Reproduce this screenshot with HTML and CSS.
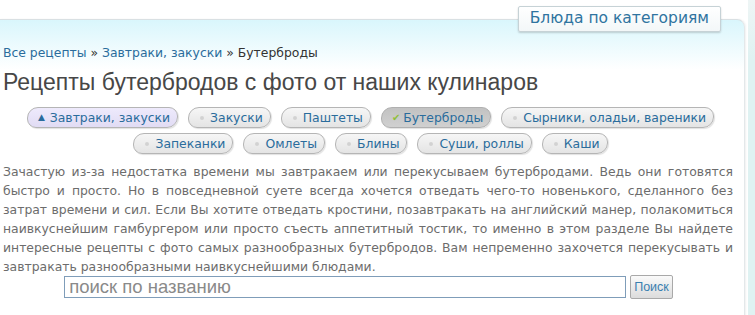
FILE: index.html
```html
<!DOCTYPE html>
<html lang="ru">
<head>
  <meta charset="UTF-8">
  <title>Рецепты бутербродов</title>
  <link rel="stylesheet" href="styles.css">
</head>
<body>
  <div class="wrap">
    <div class="main">
      <div class="panel">
        <a class="cat-tab" href="#">Блюда по категориям</a>

        <div class="crumbs">
          <a href="#">Все рецепты</a> &raquo; <a href="#">Завтраки, закуски</a> &raquo; <span>Бутерброды</span>
        </div>

        <h1>Рецепты бутербродов с фото от наших кулинаров</h1>

        <div class="tag-list">
          <div class="tags">
            <a class="tag parent" href="#"><span class="mark up">▲</span>Завтраки, закуски</a>
            <a class="tag" href="#"><span class="mark dot"></span>Закуски</a>
            <a class="tag" href="#"><span class="mark dot"></span>Паштеты</a>
            <a class="tag active" href="#"><span class="mark check">✔</span>Бутерброды</a>
            <a class="tag" href="#"><span class="mark dot"></span>Сырники, оладьи, вареники</a>
          </div>
          <div class="tags">
            <a class="tag" href="#"><span class="mark dot"></span>Запеканки</a>
            <a class="tag" href="#"><span class="mark dot"></span>Омлеты</a>
            <a class="tag" href="#"><span class="mark dot"></span>Блины</a>
            <a class="tag" href="#"><span class="mark dot"></span>Суши, роллы</a>
            <a class="tag" href="#"><span class="mark dot"></span>Каши</a>
          </div>
        </div>

        <p class="intro">Зачастую из-за недостатка времени мы завтракаем или перекусываем бутербродами. Ведь они готовятся быстро и просто. Но в повседневной суете всегда хочется отведать чего-то новенького, сделанного без затрат времени и сил. Если Вы хотите отведать кростини, позавтракать на английский манер, полакомиться наивкуснейшим гамбургером или просто съесть аппетитный тостик, то именно в этом разделе Вы найдете интересные рецепты с фото самых разнообразных бутербродов. Вам непременно захочется перекусывать и завтракать разнообразными наивкуснейшими блюдами.</p>

        <form class="search" onsubmit="return false">
          <input type="text" placeholder="поиск по названию">
          <button type="submit">Поиск</button>
        </form>
      </div>
    </div>
    <div class="side"></div>
  </div>
</body>
</html>
```

FILE: styles.css
```css
html, body {
  margin: 0;
  padding: 0;
  height: 100%;
  overflow: hidden;
  background: #fff;
}

body {
  font-family: 'DejaVu Sans', Verdana, sans-serif;
  font-size: 12.4px;
}

a {
  text-decoration: none;
  color: #2a6c9c;
}

.wrap {
  display: flex;
  height: 100%;
}

.main {
  width: 748px;
  flex: none;
}

.side {
  flex: 1;
  background: linear-gradient(to bottom, #eef5f5, #dff2f2 60px);
}

.panel {
  position: relative;
  width: 741px;
  margin-top: 19px;
  padding: 25px 0 40px 3px;
  border-top: 1px solid #d9e0e3;
  border-right: 1px solid #e3e8ea;
  border-top-right-radius: 8px;
  background: linear-gradient(to bottom, #d9f6fc, #ffffff 50px);
  box-shadow: 1px 0 2px rgba(0, 0, 0, 0.06);
}

.cat-tab {
  position: absolute;
  top: -14px;
  right: 23px;
  padding: 0 11px;
  height: 24px;
  line-height: 23px;
  font-size: 15.5px;
  color: #2f74a0;
  border: 1px solid #c6d2d6;
  border-radius: 2px;
  background: linear-gradient(to bottom, #ffffff, #f3f7f8);
  box-shadow: 0 1px 2px rgba(0, 0, 0, 0.18);
}

.crumbs {
  line-height: 16px;
  color: #333;
}

h1 {
  margin: 7px 0 0;
  font-family: 'Liberation Sans', Arial, sans-serif;
  font-size: 23px;
  font-weight: normal;
  line-height: 28px;
  color: #474747;
}

.tag-list {
  margin-top: 11px;
  padding-right: 6px;
}

.tags {
  display: flex;
  justify-content: center;
  gap: 10px;
}

.tags + .tags {
  margin-top: 5px;
}

.tag {
  flex: none;
  display: flex;
  align-items: center;
  height: 19px;
  padding: 0 7px 0 11px;
  line-height: 19px;
  white-space: nowrap;
  color: #2a6c9c;
  border: 1px solid #b5b5b5;
  border-radius: 11px 9px 11px 9px;
  background: linear-gradient(to bottom, #f6f6f6, #e4e4e4);
  box-shadow: 1px 1px 1px rgba(0, 0, 0, 0.12);
}

.tag.parent {
  padding-left: 10px;
  background: linear-gradient(to bottom, #eeeafc, #e1dcf4);
}

.tag.active {
  padding-left: 10px;
  background: linear-gradient(to bottom, #c2c2c2, #d0d0d0);
  border-color: #b0b0b0;
}

.mark.dot {
  width: 4px;
  height: 4px;
  border-radius: 50%;
  background: #d2d2d2;
  margin-right: 6px;
}

.mark.up {
  font-size: 9px;
  color: #2a6c9c;
  margin-right: 5px;
}

.mark.check {
  font-size: 10px;
  color: #8fbf3a;
  margin-right: 3px;
}

.intro {
  margin: 8px 0 0;
  width: 730px;
  line-height: 19px;
  color: #6c6c6c;
  text-align: justify;
}

.search {
  display: flex;
  justify-content: center;
  align-items: center;
  gap: 4px;
  margin-top: -1px;
  padding-right: 10px;
}

.search input {
  width: 562px;
  height: 22px;
  box-sizing: border-box;
  padding: 0 4px;
  font-family: 'Liberation Sans', Arial, sans-serif;
  font-size: 18.5px;
  color: #555;
  border: 1px solid #7f9db9;
  outline: none;
}

.search input::placeholder {
  color: #8a8a8a;
}

.search button {
  height: 24px;
  padding: 0 3px;
  font-family: 'Liberation Sans', Arial, sans-serif;
  font-size: 12.5px;
  color: #3a7fb0;
  border: 1px solid #a9a9a9;
  border-radius: 2px;
  background: linear-gradient(to bottom, #fafafa, #dcdcdc);
  cursor: pointer;
}
```
